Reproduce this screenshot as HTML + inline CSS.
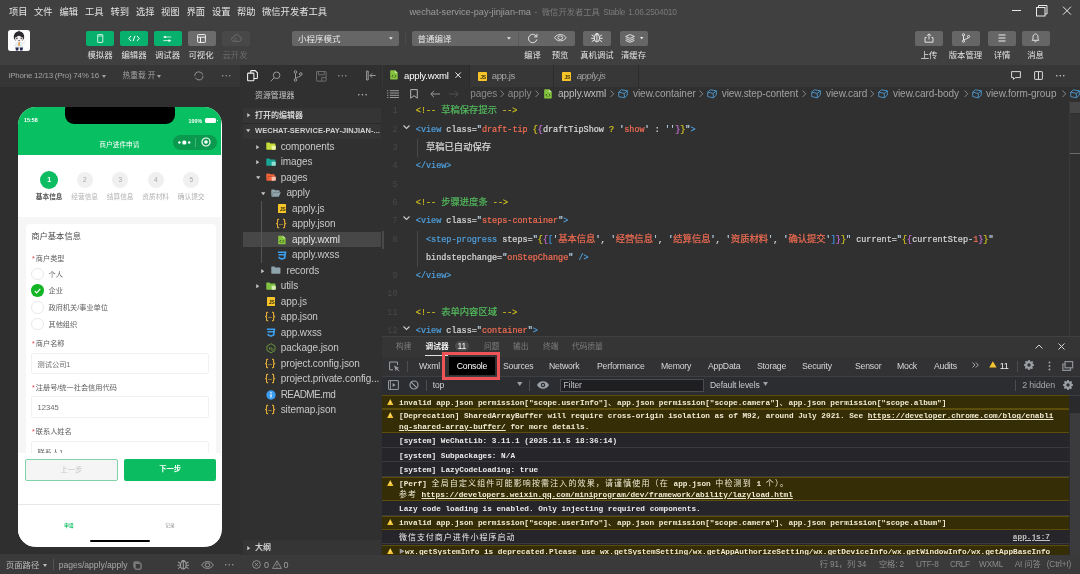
<!DOCTYPE html>
<html lang="zh-CN">
<head>
<meta charset="utf-8">
<title>wechat-service-pay-jinjian-ma - 微信开发者工具 Stable 1.06.2504010</title>
<style>
*{box-sizing:border-box;margin:0;padding:0}
html,body{width:1080px;height:574px;overflow:hidden;background:#2e2e2e}
body{font-family:"Liberation Sans","Noto Sans CJK SC",sans-serif;color:#ccc;font-size:10px;-webkit-font-smoothing:antialiased}
#app{position:relative;width:1080px;height:574px;overflow:hidden;will-change:transform}
.a{position:absolute}
.t{position:absolute;white-space:nowrap}
svg{position:absolute;overflow:visible}
.mono{font-family:"Liberation Mono","Noto Sans CJK SC",monospace}

/* ---------- top bars ---------- */
#top{left:0;top:0;width:1080px;height:65px;background:#404040}
.menu{top:4.700px;height:15px;line-height:15px;font-size:9.3px;color:#e4e4e4}
.tb{top:30.500px;height:15.300px;width:28px;border-radius:2px;background:#666}
.tb.g{background:#07b06d}
.tb.d{background:#484848}
.tl{top:49px;height:12px;line-height:12px;font-size:8.4px;color:#e2e2e2;text-align:center;width:40px}
.dd{top:30.500px;height:15.300px;border-radius:2px;background:#666;color:#e6e6e6;font-size:8.500px;line-height:17.500px;padding-left:6px}

/* ---------- simulator ---------- */
#sim{left:0;top:65px;width:240px;height:509px;background:#2f2f2f}
#simbar{left:0;top:0;width:240px;height:21.600px;background:#363636}
#simfoot{left:0;top:488.500px;width:240px;height:21px;background:#3a3a3a}
#phone{left:18.400px;top:42px;width:203.500px;height:440px;border-radius:18px;background:#fff;overflow:hidden}


/* phone */
.stp{top:64.500px;width:16px;height:16px;border-radius:8px;background:#f0f0f0;color:#a8a8a8;font-size:6.500px;line-height:16px;text-align:center}
.stl{top:85.200px;height:10px;line-height:10px;font-size:6.700px;color:#b2b2b2;width:40px;text-align:center}
.fl{left:13.700px;height:10px;line-height:10px;font-size:7.200px;color:#5c5c5c}
.fl i{font-style:normal;color:#e64340;margin-right:-1.100px}
.rd{left:13.100px;width:12.500px;height:12.500px;border-radius:50%;border:.7px solid #e9e9e9;background:#fff}
.rd.on{background:#14b524;border:none}
.rl{left:30.100px;height:12.500px;line-height:12.500px;font-size:7.200px;color:#606060}
.inp{left:12.700px;width:177.500px;height:21.500px;border:.7px solid #f1f1f1;border-radius:2px;background:#fff;font-size:7.200px;color:#6a6a6a;line-height:22px;padding-left:5.500px}

/* ---------- explorer ---------- */
#exp{left:240px;top:65px;width:142px;height:490px;background:#303030}
.row{position:absolute;left:2px;width:139px;height:15.5px;line-height:15.5px;font-size:10.2px;color:#ccc;white-space:nowrap;overflow:hidden}
.row span{position:absolute;top:0}

.ft{height:15.500px;line-height:15px;font-size:10px;letter-spacing:-.08px}
/* ---------- editor ---------- */
#ed{left:382px;top:65px;width:698px;height:271px;background:#303030}
.cl{position:absolute;left:0;height:18.3px;line-height:18.3px;font-size:8.48px;white-space:pre;color:#d4d4d4;-webkit-text-stroke:.22px}
.ln{position:absolute;width:14px;text-align:right;color:#484848;font-size:8.48px;height:18.3px;line-height:18.3px}

.bc{top:21px;height:15px;line-height:15px;font-size:10px;letter-spacing:-.05px}
.cj{font-size:9.300px;line-height:1px}
/* ---------- debugger ---------- */
#dbg{left:382px;top:336px;width:698px;height:219px;background:#2a2a2a}
.cr{position:absolute;left:0;width:687px;font-size:7.740px;color:#ececec;font-weight:bold;white-space:pre;border-bottom:.7px solid #3a3a3e;overflow:hidden}
.cr.w{background:#352d05;border-top:.7px solid #5c4e0a;border-bottom:.7px solid #5c4e0a;color:#f0ead4}
.cr u{text-decoration:underline}
.cc{font-family:"Noto Sans CJK SC",sans-serif;font-size:8px;letter-spacing:.95px;font-weight:normal;line-height:1px}

/* ---------- status ---------- */
#status{left:240px;top:555px;width:840px;height:19px;background:#3a3a3a;color:#8e8e8e;font-size:9px}
</style>
</head>
<body>
<div id="app">

<!-- TOP -->
<div id="top" class="a">
<span class="t menu" style="left:9px">项目</span>
<span class="t menu" style="left:34px">文件</span>
<span class="t menu" style="left:59.5px">编辑</span>
<span class="t menu" style="left:85px">工具</span>
<span class="t menu" style="left:110.5px">转到</span>
<span class="t menu" style="left:136px">选择</span>
<span class="t menu" style="left:161px">视图</span>
<span class="t menu" style="left:186.5px">界面</span>
<span class="t menu" style="left:212px">设置</span>
<span class="t menu" style="left:237px">帮助</span>
<span class="t menu" style="left:262px">微信开发者工具</span>
<span class="t" id="ttl" style="left:409.400px;top:4.900px;height:15px;line-height:15px;font-size:9.200px;color:#9c9c9c">wechat-service-pay-jinjian-ma</span>
<span class="t" style="left:534.500px;top:4.900px;height:15px;line-height:15px;font-size:8.300px;color:#7a7a7a">-</span>
<span class="t" style="left:541.800px;top:4.900px;height:15px;line-height:15px;font-size:8.300px;color:#7a7a7a">微信开发者工具</span>
<span class="t" style="left:603.300px;top:4.900px;height:15px;line-height:15px;font-size:8.300px;color:#7a7a7a;letter-spacing:-.3px">Stable</span>
<span class="t" style="left:628.300px;top:4.900px;height:15px;line-height:15px;font-size:8.300px;color:#7a7a7a;letter-spacing:-.2px">1.06.2504010</span>
<!-- window controls -->
<svg style="left:1010px;top:3px" width="66" height="16" viewBox="0 0 66 16" fill="none" stroke="#e8e8e8" stroke-width="1"><path d="M2 7.5h9"/><rect x="26.5" y="4.5" width="8.5" height="8.5"/><path d="M28.5 4.5v-2h8.5v8.5h-2"/><path d="M53 3.7l8 8M61 3.7l-8 8"/></svg>
<!-- avatar -->
<div class="a" style="left:8.200px;top:29.900px;width:22px;height:21.500px;border-radius:2.500px;background:#fcfcfc;overflow:hidden">
<svg style="left:0;top:0" width="22" height="21.500" viewBox="0 0 22 21.500"><path d="M5.900 8.300C5.300 4.300 7.600 1.600 10.200 1.500l.8-1.300.8 1.300c2.800.2 4.900 2.800 4.300 6.800l-1.300 2.300H7.200z" fill="#2c2c30"/><ellipse cx="11" cy="8.800" rx="3.900" ry="3.100" fill="#f6f1ee"/><path d="M7.300 7.300c1.500-.3 2.800-1.200 3.500-2.300.9 1.200 2.400 2 3.900 2.300l.3-1.800-3.900-2.300-3.900 2z" fill="#2c2c30"/><circle cx="8.900" cy="8.400" r=".8" fill="#4a4a4a"/><circle cx="13.300" cy="8.400" r=".8" fill="#4a4a4a"/><ellipse cx="11.100" cy="10.600" rx=".7" ry=".55" fill="#333"/><path d="M7.800 12.600c1.800-1.100 4.800-1.100 6.600 0l.9 5.200H6.600z" fill="#e6edf1"/><path d="M4.700 16.300l3-2.800.4 2z" fill="#e6edf1"/><path d="M14.400 13l2.600-3 .7.500-1.700 4z" fill="#e8eef2"/><path d="M10.400 12h1.400l.3 3.300-1 .9-1-.9z" fill="#dba552"/><path d="M7.400 17.400h3.300l-.4 3H7.900zM11.700 17.400H15l-.5 3h-2.400z" fill="#23264c"/></svg>
</div>
<!-- left buttons -->
<div class="a tb g" style="left:86px"><svg style="left:10.800px;top:3.200px" width="6.500" height="9" viewBox="0 0 6.500 9" fill="none" stroke="#eafff4" stroke-width=".85"><rect x=".7" y=".6" width="5.100" height="7.800" rx=".4"/><path d="M.8 2h4.900" stroke-width=".7"/></svg></div>
<div class="a tb g" style="left:120px"><svg style="left:8px;top:4px" width="12" height="7" viewBox="0 0 12 7" fill="none" stroke="#fff" stroke-width="1"><path d="M3 1L.8 3.5 3 6M9 1l2.2 2.5L9 6M7 .8L5 6.2"/></svg></div>
<div class="a tb g" style="left:153.5px"><svg style="left:9.800px;top:4px" width="8.500" height="7.500" viewBox="0 0 8.500 7.500" fill="none" stroke="#eafff4" stroke-width=".8"><path d="M.3 2h7.900M.3 5.600h7.900"/><rect x="1.300" y=".9" width="1.800" height="2.200" rx=".4" fill="#eafff4" stroke="none"/><rect x="5.300" y="4.500" width="1.800" height="2.200" rx=".4" fill="#eafff4" stroke="none"/></svg></div>
<div class="a tb" style="left:187.500px;background:#6c6c6c"><svg style="left:9.5px;top:3px" width="9" height="9" viewBox="0 0 9 9" fill="none" stroke="#f2f2f2" stroke-width="1"><rect x=".6" y=".6" width="7.8" height="7.8" rx=".6"/><path d="M.6 3.2h7.800M3.500 3.2v5.200"/></svg></div>
<div class="a tb d" style="left:222px"><svg style="left:8.500px;top:3.500px" width="11" height="8" viewBox="0 0 11 8" fill="none" stroke="#707070" stroke-width=".85"><path d="M2.800 7.300a2.100 2.100 0 0 1-.1-4.200 3.100 3.100 0 0 1 5.900-.5 2.400 2.400 0 0 1-.2 4.700z"/><path d="M4.300 7.200a2 2 0 0 1 1.500-3.300" stroke-width=".7"/></svg></div>
<span class="t tl" style="left:80px">模拟器</span>
<span class="t tl" style="left:114px">编辑器</span>
<span class="t tl" style="left:147.500px">调试器</span>
<span class="t tl" style="left:181px">可视化</span>
<span class="t tl" style="left:215px;color:#6a6a6a">云开发</span>
<!-- dropdowns -->
<div class="a dd" style="left:292px;width:107px">小程序模式<svg style="left:96.500px;top:6.800px" width="3.800" height="2.600" viewBox="0 0 5 3"><path d="M0 0h5L2.500 3z" fill="#eee"/></svg></div>
<div class="a" style="left:405px;top:31px;width:1px;height:13px;background:#4a4a4a"></div>
<div class="a dd" style="left:411.500px;width:106px;border-radius:2px 0 0 2px">普通编译<svg style="left:95.500px;top:6.800px" width="3.800" height="2.600" viewBox="0 0 5 3"><path d="M0 0h5L2.500 3z" fill="#eee"/></svg></div>
<!-- center buttons -->
<div class="a tb" style="left:517.500px;width:57px;border-radius:0 2px 2px 0;border-left:.8px solid #5a5a5a">
<svg style="left:8px;top:2.300px" width="11.500" height="10.300" viewBox="0 0 10 9" fill="none" stroke="#eee" stroke-width=".8"><path d="M8.300 3.200A3.700 3.700 0 1 0 8.600 5.600"/><path d="M8.700 .8v2.600H6.200" /></svg>
<svg style="left:35.700px;top:3.800px" width="12.600" height="7.400" viewBox="0 0 12 7" fill="none" stroke="#eee" stroke-width=".8"><path d="M.5 3.500C2 1.200 4 .5 6 .5s4 .7 5.500 3C10 5.800 8 6.500 6 6.500S2 5.800.5 3.500z"/><ellipse cx="6" cy="3.500" rx="2.300" ry="1.700"/></svg>
</div>
<div class="a tb" style="left:583px"><svg style="left:7.200px;top:1.700px" width="13.800" height="11.500" viewBox="0 0 12 10" fill="none" stroke="#f0f0f0" stroke-width=".8"><ellipse cx="6" cy="5.300" rx="2.300" ry="3.300"/><path d="M6 2v6.600M4.300 2.300C4.500 .9 7.500 .9 7.700 2.300M3.700 4L1.500 2.500M3.700 5.500H1M3.700 7l-2.200 1.500M8.300 4l2.200-1.500M8.300 5.500H11M8.300 7l2.200 1.500"/></svg></div>
<div class="a tb" style="left:619.500px"><svg style="left:5.500px;top:3px" width="10" height="9" viewBox="0 0 10 9" fill="none" stroke="#f0f0f0" stroke-width=".9"><path d="M5 .6L9.300 2.500 5 4.400 .7 2.500zM.7 4.500L5 6.400l4.300-1.900M.7 6.400L5 8.300l4.300-1.900"/></svg><svg style="left:20px;top:6.500px" width="3.400" height="2.200" viewBox="0 0 4 2.500"><path d="M0 0h4L2 2.500z" fill="#f0f0f0"/></svg></div>
<span class="t tl" style="left:512.500px">编译</span>
<span class="t tl" style="left:540px">预览</span>
<span class="t tl" style="left:577px">真机调试</span>
<span class="t tl" style="left:613.500px">清缓存</span>
<!-- right buttons -->
<div class="a tb" style="left:915px"><svg style="left:9px;top:2.500px" width="10" height="10" viewBox="0 0 10 10" fill="none" stroke="#eee" stroke-width=".9"><path d="M5 6.500V1M3 2.800L5 .8l2 2M2.500 4.500H1v4.700h8V4.500H7.500"/></svg></div>
<div class="a tb" style="left:951.500px"><svg style="left:9px;top:2.500px" width="10" height="10" viewBox="0 0 10 10" fill="none" stroke="#eee" stroke-width=".9"><circle cx="2.500" cy="1.800" r="1.100"/><circle cx="2.500" cy="8.200" r="1.100"/><circle cx="7.500" cy="3.500" r="1.100"/><path d="M2.500 3v4M7.500 4.600C7.500 6 3.500 5.800 2.700 7"/></svg></div>
<div class="a tb" style="left:988px"><svg style="left:10px;top:3.500px" width="8" height="8" viewBox="0 0 8 8" fill="none" stroke="#eee" stroke-width="1"><path d="M.5 1h7M.5 4h7M.5 7h7"/></svg></div>
<div class="a tb" style="left:1021.500px"><svg style="left:9.500px;top:2.500px" width="9" height="10" viewBox="0 0 9 10" fill="none" stroke="#eee" stroke-width=".9"><path d="M1.200 7.300c.8-.8.800-1.600.8-3.200C2 2.300 3 1 4.500 1S7 2.300 7 4.100c0 1.600 0 2.400.8 3.200zM3.700 8.700h1.600"/></svg></div>
<span class="t tl" style="left:909px">上传</span>
<span class="t tl" style="left:945.500px">版本管理</span>
<span class="t tl" style="left:982px">详情</span>
<span class="t tl" style="left:1015.500px">消息</span>

</div>

<!-- SIM -->
<div id="sim" class="a">
<div id="simbar" class="a"><span class="t" style="left:8.700px;top:4px;height:14px;line-height:14px;font-size:8px;letter-spacing:-.25px;color:#a2a2a2">iPhone 12/13 (Pro) 74% 16</span>
<svg style="left:101.500px;top:10px" width="4" height="3" viewBox="0 0 4 3"><path d="M0 0h4L2 3z" fill="#a2a2a2"/></svg>
<span class="t" style="left:122.500px;top:4px;height:14px;line-height:14px;font-size:7.700px;color:#a2a2a2">热重载 开</span>
<svg style="left:157px;top:10px" width="4" height="3" viewBox="0 0 4 3"><path d="M0 0h4L2 3z" fill="#a2a2a2"/></svg>
<svg style="left:193.700px;top:6.200px" width="9.800" height="9.800" viewBox="0 0 9 9" fill="none" stroke="#9a9a9a" stroke-width=".85"><circle cx="4.500" cy="4.500" r="3.700" stroke-dasharray="9.500 1.600 10.500 1.600"/></svg>
<svg style="left:221.7px;top:10.450000000000003px" width="8.5" height="1.5" viewBox="0 0 8.5 1.5"><circle cx="0.75" cy="0.75" r="0.75" fill="#a0a0a0"/><circle cx="4.25" cy="0.75" r="0.75" fill="#a0a0a0"/><circle cx="7.75" cy="0.75" r="0.75" fill="#a0a0a0"/></svg>
</div>
<div id="phone" class="a"><!-- header -->
<div class="a" style="left:0;top:0;width:203px;height:47.500px;background:#08bf61"></div>
<div class="a" style="left:46.800px;top:-6px;width:110px;height:23px;border-radius:9px;background:#000"></div>
<span class="t" style="left:5.500px;top:9px;height:8px;line-height:8px;font-size:5.400px;color:#fff;font-weight:bold">15:58</span>
<span class="t" style="left:170.200px;top:9.600px;height:8px;line-height:8px;font-size:5.300px;color:#fff;font-weight:bold">100%</span>
<div class="a" style="left:186.200px;top:11.400px;width:11.800px;height:4.500px;border-radius:1.500px;background:#fff"></div>
<div class="a" style="left:198.300px;top:12.700px;width:.8px;height:1.800px;background:#fff"></div>
<span class="t" style="left:61px;width:80px;text-align:center;top:33.200px;height:10px;line-height:10px;font-size:6.700px;color:#fff">商户进件申请</span>
<div class="a" style="left:155.100px;top:27.800px;width:43.600px;height:15px;border-radius:8px;background:#0a994e"></div>
<div class="a" style="left:176.800px;top:31px;width:.6px;height:8.500px;background:#3fb57a"></div>
<svg style="left:160px;top:32.800px" width="13" height="5" viewBox="0 0 13 5"><circle cx="1.400" cy="2.500" r="1.200" fill="#fff"/><rect x="4.300" y=".5" width="4" height="4" rx="1.500" fill="#fff"/><circle cx="11.200" cy="2.500" r="1.200" fill="#fff"/></svg>
<svg style="left:182.500px;top:30.300px" width="10" height="10" viewBox="0 0 10 10"><circle cx="5" cy="5" r="4" fill="none" stroke="#fff" stroke-width="1.200"/><circle cx="5" cy="5" r="1.800" fill="#fff"/></svg>
<!-- steps -->
<div class="a" style="left:0;top:47.500px;width:203px;height:62.800px;background:#fff"></div>
<div class="a" style="left:21.700px;top:63.500px;width:18px;height:18px;border-radius:9px;background:#0bbd60;color:#fff;font-size:7px;line-height:18px;text-align:center;font-weight:bold">1</div>
<div class="a stp" style="left:58.4px">2</div>
<div class="a stp" style="left:93.9px">3</div>
<div class="a stp" style="left:129.4px">4</div>
<div class="a stp" style="left:164.9px">5</div>
<span class="t stl" style="left:10.8px;color:#555;font-weight:bold">基本信息</span>
<span class="t stl" style="left:46.3px">经营信息</span>
<span class="t stl" style="left:81.8px">结算信息</span>
<span class="t stl" style="left:117.3px">资质材料</span>
<span class="t stl" style="left:152.8px">确认提交</span>
<!-- body -->
<div class="a" style="left:0;top:110px;width:203px;height:240px;background:#f6f6f6"></div>
<div class="a" style="left:7.800px;top:116.800px;width:189.700px;height:240px;border-radius:4px;background:#fff"></div>
<span class="t" style="left:12.800px;top:123px;height:12px;line-height:12px;font-size:8.300px;color:#4c4c4c">商户基本信息</span>
<span class="t fl" style="top:146.800px"><i>*</i> 商户类型</span>
<div class="a rd" style="top:160.750px"></div><span class="t rl" style="top:162px">个人</span>
<div class="a rd on" style="top:177.250px"><svg style="left:2.500px;top:3.300px" width="7" height="6" viewBox="0 0 7 6" fill="none" stroke="#fff" stroke-width="1.100"><path d="M.8 3l1.900 1.900L6.300.9"/></svg></div><span class="t rl" style="top:178px">企业</span>
<div class="a rd" style="top:194.250px"></div><span class="t rl" style="top:194.700px">政府机关/事业单位</span>
<div class="a rd" style="top:210.750px"></div><span class="t rl" style="top:212.400px">其他组织</span>
<span class="t fl" style="top:232px"><i>*</i> 商户名称</span>
<div class="a inp" style="top:245.800px;height:21px">测试公司1</div>
<span class="t fl" style="top:275.500px"><i>*</i> 注册号/统一社会信用代码</span>
<div class="a inp" style="top:289px;font-size:7.600px">12345</div>
<span class="t fl" style="top:320px"><i>*</i> 联系人姓名</span>
<div class="a inp" style="top:333.500px">联系人1</div>
<!-- action bar -->
<div class="a" style="left:0;top:345.500px;width:202px;height:52px;background:#fff"></div>
<div class="a" style="left:6.500px;top:352px;width:93.300px;height:21.500px;border-radius:2px;background:#f5f5f5;border:.8px solid #7fd3a6;color:#c4c4c4;font-size:7.300px;line-height:20px;text-align:center">上一步</div>
<div class="a" style="left:106px;top:352px;width:91.700px;height:21.500px;border-radius:2px;background:#0bbd60;color:#fff;font-size:7.300px;line-height:20px;text-align:center;font-weight:bold">下一步</div>
<!-- tabbar -->
<div class="a" style="left:0;top:397px;width:202px;height:42px;background:#fff;border-top:.6px solid #e6e6e6"></div>
<span class="t" style="left:40.500px;width:20px;text-align:center;top:416px;height:6px;line-height:6px;font-size:4.600px;color:#0bbd60;font-weight:bold">申请</span>
<span class="t" style="left:141.500px;width:20px;text-align:center;top:416px;height:6px;line-height:6px;font-size:4.600px;color:#8a8a8a">记录</span>
<div class="a" style="left:71.700px;top:432.800px;width:60px;height:2.400px;border-radius:1.200px;background:#000"></div>
</div>
<div id="simfoot" class="a"><span class="t" style="left:5.900px;top:4.300px;height:14px;line-height:14px;font-size:8.350px;color:#bdbdbd">页面路径</span>
<svg style="left:43px;top:10.500px" width="4" height="3" viewBox="0 0 4 3"><path d="M0 0h4L2 3z" fill="#bdbdbd"/></svg>
<div class="a" style="left:52.500px;top:5.500px;width:.8px;height:11px;background:#555"></div>
<span class="t" style="left:58.800px;top:4px;height:14px;line-height:14px;font-size:8.600px;letter-spacing:-.04px;color:#a8a8a8">pages/apply/apply</span>
<svg style="left:132.600px;top:7px" width="9" height="9" viewBox="0 0 9 9" fill="none" stroke="#a0a0a0" stroke-width=".9"><rect x="2" y="2.200" width="6" height="6" rx=".6"/><path d="M1 6.500V1h5.500"/></svg>
<svg style="left:176.300px;top:5.800px" width="14.600" height="11.300" viewBox="0 0 13 10" fill="none" stroke="#a0a0a0" stroke-width=".9"><ellipse cx="6.500" cy="5.300" rx="2.500" ry="3.500"/><path d="M6.500 2v6.800M4.800 2.300C5 .9 8 .9 8.200 2.300M4 4L1.800 2.500M4 5.500H1.300M4 7l-2.200 1.500M9 4l2.200-1.500M9 5.500h2.700M9 7l2.200 1.500"/></svg>
<svg style="left:200.500px;top:7.500px" width="13" height="8" viewBox="0 0 13 8" fill="none" stroke="#a0a0a0" stroke-width=".9"><path d="M.6 4C2.200 1.500 4.300.6 6.500.6s4.300.9 5.900 3.400C10.800 6.500 8.700 7.400 6.500 7.400S2.200 6.500.6 4z"/><ellipse cx="6.500" cy="4" rx="2.400" ry="1.900"/></svg>
<svg style="left:225px;top:10.600px" width="8.5" height="1.5" viewBox="0 0 8.5 1.5"><circle cx="0.75" cy="0.75" r="0.75" fill="#a0a0a0"/><circle cx="4.25" cy="0.75" r="0.75" fill="#a0a0a0"/><circle cx="7.75" cy="0.75" r="0.75" fill="#a0a0a0"/></svg>
</div>
</div>

<!-- EXPLORER -->
<div id="exp" class="a">
<div class="a" style="left:0;top:0;width:142px;height:22px;background:#303030"></div>
<svg style="left:7.300px;top:5.200px" width="11" height="11.500" viewBox="0 0 11 11.500" fill="none" stroke="#f2f2f2" stroke-width="1.050"><path d="M3.700 3V1.300c0-.4.300-.7.700-.7h3.800l2.200 2.200v5c0 .4-.3.700-.7.700H7"/><rect x=".6" y="3.100" width="6.300" height="7.700" rx=".8"/></svg>
<svg style="left:30px;top:5.500px" width="11" height="11" viewBox="0 0 11 11" fill="none" stroke="#9a9a9a" stroke-width="1"><circle cx="6.600" cy="4.300" r="3.300"/><path d="M4.300 6.700L.8 10.300"/></svg>
<svg style="left:53px;top:5px" width="10" height="12" viewBox="0 0 10 12" fill="none" stroke="#9a9a9a" stroke-width="1"><circle cx="2.500" cy="2" r="1.300"/><circle cx="2.500" cy="10" r="1.300"/><circle cx="7.800" cy="4" r="1.300"/><path d="M2.500 3.300v5.400M7.800 5.300c0 2-4.500 1.600-5.300 3.400"/></svg>
<svg style="left:76px;top:5.700px" width="10.600" height="10.600" viewBox="0 0 10.600 10.600" fill="none" stroke="#707070" stroke-width=".95"><rect x=".5" y=".5" width="9.600" height="9.600" rx=".5"/><path d="M2.400.5v3.300h5.800V.5M5.800 10.100V6.600h4.300"/></svg>
<svg style="left:97.5px;top:10.049999999999997px" width="8.5" height="1.5" viewBox="0 0 8.5 1.5"><circle cx="0.75" cy="0.75" r="0.75" fill="#9a9a9a"/><circle cx="4.25" cy="0.75" r="0.75" fill="#9a9a9a"/><circle cx="7.75" cy="0.75" r="0.75" fill="#9a9a9a"/></svg>
<svg style="left:126px;top:6px" width="10" height="9" viewBox="0 0 10 9" fill="none" stroke="#9a9a9a" stroke-width="1"><path d="M.6 0h1.600v9H.6zM9.700 4.500H4.200M6.200 2.300L4 4.500l2.200 2.200"/></svg>
<span class="t" style="left:15px;top:23.500px;height:13px;line-height:13px;font-size:7.900px;color:#c4c4c4">资源管理器</span>
<svg style="left:118px;top:28.950000000000003px" width="8.9" height="1.5" viewBox="0 0 8.9 1.5"><circle cx="0.75" cy="0.75" r="0.75" fill="#c4c4c4"/><circle cx="4.45" cy="0.75" r="0.75" fill="#c4c4c4"/><circle cx="8.15" cy="0.75" r="0.75" fill="#c4c4c4"/></svg>
<div class="a" style="left:2.500px;top:42.700px;width:138.500px;height:31px;background:#353535"></div>
<div class="a" style="left:2.500px;top:58px;width:138.500px;height:.6px;background:#2a2a2a"></div>
<svg style="left:6.8px;top:48.300000000000004px" width="3.400" height="4.400" viewBox="0 0 4 5"><path d="M.3 0v5L3.800 2.500z" fill="#c8c8c8"/></svg>
<span class="t" style="left:15px;top:42.700px;height:15.500px;line-height:15.500px;font-size:8px;font-weight:bold;color:#d0d0d0">打开的编辑器</span>
<svg style="left:5.8999999999999995px;top:64.4px" width="4.400" height="3.400" viewBox="0 0 5 4"><path d="M0 .3h5L2.500 3.800z" fill="#c8c8c8"/></svg>
<span class="t" style="left:15px;top:58.200px;height:15.500px;line-height:15.500px;font-size:7.500px;font-weight:bold;color:#d0d0d0;letter-spacing:.05px">WECHAT-SERVICE-PAY-JINJIAN-...</span>
<div class="a" style="left:2.500px;top:166.9px;width:138.500px;height:15.500px;background:#474747"></div>
<div class="a" style="left:21.300px;top:135.9px;width:.6px;height:62.0px;background:#555"></div>
<svg style="left:16.4px;top:79.5px" width="3.400" height="4.400" viewBox="0 0 4 5"><path d="M.3 0v5L3.800 2.500z" fill="#c8c8c8"/></svg>
<svg style="left:26.2px;top:77.4px" width="10" height="8.200" viewBox="0 0 11 9"><path d="M.3 1.200c0-.4.3-.7.700-.7h2.800l1 1.100h4.900c.4 0 .7.300.7.700v5.500c0 .4-.3.700-.7.700H1c-.4 0-.7-.3-.7-.7z" fill="#c5dc3a"/><rect x="6.200" y="4.200" width="4.600" height="4.400" rx=".8" fill="#eef5a8"/></svg>
<span class="t ft" style="left:40.7px;top:73.9px;color:#c8c8c8">components</span>
<svg style="left:16.4px;top:95.0px" width="3.400" height="4.400" viewBox="0 0 4 5"><path d="M.3 0v5L3.800 2.500z" fill="#c8c8c8"/></svg>
<svg style="left:26.2px;top:92.9px" width="10" height="8.200" viewBox="0 0 11 9"><path d="M.3 1.200c0-.4.3-.7.700-.7h2.800l1 1.100h4.900c.4 0 .7.300.7.700v5.500c0 .4-.3.700-.7.700H1c-.4 0-.7-.3-.7-.7z" fill="#17a596"/><rect x="6.200" y="4.200" width="4.600" height="4.400" rx=".8" fill="#8fe0d2"/></svg>
<span class="t ft" style="left:40.7px;top:89.4px;color:#c8c8c8">images</span>
<svg style="left:15.700000000000001px;top:111.10000000000001px" width="4.400" height="3.400" viewBox="0 0 5 4"><path d="M0 .3h5L2.500 3.800z" fill="#c8c8c8"/></svg>
<svg style="left:26.2px;top:108.4px" width="10" height="8.200" viewBox="0 0 11 9"><path d="M.3 8.300V1.200c0-.4.3-.7.700-.7h2.600l1 1h4.200c.4 0 .7.300.7.700v1H2.800L.3 8.300z" fill="#f4623a"/><path d="M2.600 3.600h8.200L8.600 8.500H.5z" fill="#f4623a"/><rect x="6.200" y="4.200" width="4.600" height="4.400" rx=".8" fill="#ffc1ad"/></svg>
<span class="t ft" style="left:40.7px;top:104.9px;color:#c8c8c8">pages</span>
<svg style="left:20.7px;top:126.60000000000001px" width="4.400" height="3.400" viewBox="0 0 5 4"><path d="M0 .3h5L2.500 3.800z" fill="#c8c8c8"/></svg>
<svg style="left:31.4px;top:123.9px" width="10" height="8.200" viewBox="0 0 11 9"><path d="M.3 8.300V1.200c0-.4.3-.7.700-.7h2.600l1 1h4.200c.4 0 .7.300.7.700v1H2.800L.3 8.300z" fill="#8fa3ad"/><path d="M2.600 3.600h8.200L8.600 8.500H.5z" fill="#8fa3ad"/></svg>
<span class="t ft" style="left:46.4px;top:120.4px;color:#c8c8c8">apply</span>
<div class="a" style="left:37.5px;top:139.20000000000002px;width:8.600px;height:8.800px;background:#f7c52a;border-radius:.6px"><span class="t" style="right:.5px;bottom:.3px;font-size:5.200px;line-height:5.500px;font-weight:bold;letter-spacing:-.2px;color:#3a3208;font-family:'Liberation Sans',sans-serif">JS</span></div>
<span class="t ft" style="left:52px;top:135.9px;color:#c8c8c8">apply.js</span>
<span class="t" style="left:36.1px;top:151.4px;height:15.500px;line-height:14.500px;font-size:9.500px;font-weight:normal;color:#f3b93a;letter-spacing:-.3px;-webkit-text-stroke:.3px;font-family:'Liberation Sans',sans-serif">{<span style="font-size:6px;letter-spacing:0;position:relative;top:-.3px">··</span>}</span>
<span class="t ft" style="left:52px;top:151.4px;color:#c8c8c8">apply.json</span>
<svg style="left:38.1px;top:169.6px" width="7.800" height="10" viewBox="0 0 9 10.500"><path d="M1 .2h4.800L8.800 3.200v6.300c0 .5-.4.800-.8.800H1c-.5 0-.8-.4-.8-.8V1C.2.600.6.200 1 .2z" fill="#86c43f"/><path d="M5.600.2v3h3.200z" fill="#c9e6a0"/><path d="M3.600 5.300L2.200 6.800l1.400 1.500M5.400 5.300l1.400 1.500-1.400 1.500" fill="none" stroke="#2e4a12" stroke-width="1"/></svg>
<span class="t ft" style="left:52px;top:166.9px;color:#e0e0e0">apply.wxml</span>
<svg style="left:37px;top:185.6px" width="9.800" height="9.300" viewBox="0 0 10 9.500"><path d="M.8.400h8.800L8.600 7.600 5 9.200 1.600 7.600 1.400 6H3l.1.600L5 7.400l2-.8.300-2H1.600L1.400 3h6.100l.2-1H1z" fill="#3b9ff0"/></svg>
<span class="t ft" style="left:52px;top:182.4px;color:#c8c8c8">apply.wxss</span>
<svg style="left:21.4px;top:203.5px" width="3.400" height="4.400" viewBox="0 0 4 5"><path d="M.3 0v5L3.800 2.500z" fill="#c8c8c8"/></svg>
<svg style="left:31.4px;top:201.4px" width="10" height="8.200" viewBox="0 0 11 9"><path d="M.3 1.200c0-.4.3-.7.700-.7h2.800l1 1.100h4.900c.4 0 .7.300.7.700v5.500c0 .4-.3.700-.7.700H1c-.4 0-.7-.3-.7-.7z" fill="#8fa3ad"/></svg>
<span class="t ft" style="left:46.4px;top:197.9px;color:#c8c8c8">records</span>
<svg style="left:16.4px;top:219.0px" width="3.400" height="4.400" viewBox="0 0 4 5"><path d="M.3 0v5L3.800 2.500z" fill="#c8c8c8"/></svg>
<svg style="left:26.2px;top:216.9px" width="10" height="8.200" viewBox="0 0 11 9"><path d="M.3 1.200c0-.4.3-.7.700-.7h2.800l1 1.100h4.900c.4 0 .7.300.7.700v5.500c0 .4-.3.700-.7.700H1c-.4 0-.7-.3-.7-.7z" fill="#80c241"/><rect x="6.200" y="4.200" width="4.600" height="4.400" rx=".8" fill="#d6efb4"/></svg>
<span class="t ft" style="left:40.7px;top:213.4px;color:#c8c8c8">utils</span>
<div class="a" style="left:26.5px;top:232.20000000000002px;width:8.600px;height:8.800px;background:#f7c52a;border-radius:.6px"><span class="t" style="right:.5px;bottom:.3px;font-size:5.200px;line-height:5.500px;font-weight:bold;letter-spacing:-.2px;color:#3a3208;font-family:'Liberation Sans',sans-serif">JS</span></div>
<span class="t ft" style="left:40.7px;top:228.9px;color:#c8c8c8">app.js</span>
<span class="t" style="left:25.1px;top:244.4px;height:15.500px;line-height:14.500px;font-size:9.500px;font-weight:normal;color:#f3b93a;letter-spacing:-.3px;-webkit-text-stroke:.3px;font-family:'Liberation Sans',sans-serif">{<span style="font-size:6px;letter-spacing:0;position:relative;top:-.3px">··</span>}</span>
<span class="t ft" style="left:40.7px;top:244.4px;color:#c8c8c8">app.json</span>
<svg style="left:26px;top:263.09999999999997px" width="9.800" height="9.300" viewBox="0 0 10 9.500"><path d="M.8.400h8.800L8.600 7.600 5 9.200 1.600 7.600 1.400 6H3l.1.600L5 7.400l2-.8.300-2H1.600L1.400 3h6.100l.2-1H1z" fill="#3b9ff0"/></svg>
<span class="t ft" style="left:40.7px;top:259.9px;color:#c8c8c8">app.wxss</span>
<svg style="left:26px;top:277.9px" width="10" height="10.500" viewBox="0 0 10 10.500" fill="none" stroke="#6c9c40" stroke-width=".9"><path d="M5 .7l4 2.300v4.500L5 9.800 1 7.500V3z"/><path d="M3.500 4.200v2.600M5 4v2.500c0 .6.500.9 1.300.9.900 0 1.200-.4 1.200-.9 0-1-2.300-.5-2.300-1.500" stroke-width=".7"/></svg>
<span class="t ft" style="left:40.7px;top:275.4px;color:#c8c8c8">package.json</span>
<span class="t" style="left:25.1px;top:290.9px;height:15.500px;line-height:14.500px;font-size:9.500px;font-weight:normal;color:#f3b93a;letter-spacing:-.3px;-webkit-text-stroke:.3px;font-family:'Liberation Sans',sans-serif">{<span style="font-size:6px;letter-spacing:0;position:relative;top:-.3px">··</span>}</span>
<span class="t ft" style="left:40.7px;top:290.9px;color:#c8c8c8">project.config.json</span>
<span class="t" style="left:25.1px;top:306.4px;height:15.500px;line-height:14.500px;font-size:9.500px;font-weight:normal;color:#f3b93a;letter-spacing:-.3px;-webkit-text-stroke:.3px;font-family:'Liberation Sans',sans-serif">{<span style="font-size:6px;letter-spacing:0;position:relative;top:-.3px">··</span>}</span>
<span class="t ft" style="left:40.7px;top:306.4px;color:#c8c8c8">project.private.config...</span>
<svg style="left:26px;top:324.9px" width="10" height="10" viewBox="0 0 10 10"><circle cx="5" cy="5" r="4.700" fill="#3b9cf0"/><rect x="4.400" y="4.200" width="1.200" height="3.300" fill="#fff"/><circle cx="5" cy="2.800" r=".75" fill="#fff"/></svg>
<span class="t ft" style="left:40.7px;top:321.9px;color:#c8c8c8;letter-spacing:-.54px">README.md</span>
<span class="t" style="left:25.1px;top:337.4px;height:15.500px;line-height:14.500px;font-size:9.500px;font-weight:normal;color:#f3b93a;letter-spacing:-.3px;-webkit-text-stroke:.3px;font-family:'Liberation Sans',sans-serif">{<span style="font-size:6px;letter-spacing:0;position:relative;top:-.3px">··</span>}</span>
<span class="t ft" style="left:40.7px;top:337.4px;color:#c8c8c8">sitemap.json</span>
<div class="a" style="left:2.500px;top:474.500px;width:138.500px;height:15.500px;background:#353535"></div>
<svg style="left:6.8px;top:480.6px" width="3.400" height="4.400" viewBox="0 0 4 5"><path d="M.3 0v5L3.800 2.500z" fill="#c8c8c8"/></svg>
<span class="t" style="left:15px;top:475px;height:15.500px;line-height:15.500px;font-size:8px;font-weight:bold;color:#d0d0d0">大纲</span>
</div>

<!-- EDITOR -->
<div id="ed" class="a">
<div class="a" style="left:0;top:0;width:698px;height:22px;background:#373737"></div>
<div class="a" style="left:1px;top:0;width:86px;height:22px;background:#303030"></div>
<div class="a" style="left:87px;top:0;width:.8px;height:22px;background:#2b2b2b"></div>
<div class="a" style="left:171px;top:0;width:.8px;height:22px;background:#2b2b2b"></div>
<div class="a" style="left:255.500px;top:0;width:.8px;height:22px;background:#2b2b2b"></div>
<svg style="left:8px;top:5.2px" width="7.92" height="9.63" preserveAspectRatio="none" viewBox="0 0 9 10.500"><path d="M1 .2h4.800L8.800 3.200v6.300c0 .5-.4.800-.8.800H1c-.5 0-.8-.4-.8-.8V1C.2.600.6.200 1 .2z" fill="#86c43f"/><path d="M5.600.2v3h3.200z" fill="#c9e6a0"/><path d="M3.600 5.300L2.200 6.800l1.400 1.500M5.400 5.300l1.400 1.500-1.400 1.500" fill="none" stroke="#2e4a12" stroke-width=".9"/></svg>
<span class="t" style="left:22px;top:2.800px;height:15px;line-height:15px;font-size:9.600px;letter-spacing:-.2px;color:#fff">apply.wxml</span>
<svg style="left:72.700px;top:7px" width="6.300" height="6.300" viewBox="0 0 7 7" stroke="#f0f0f0" stroke-width="1.100" fill="none"><path d="M.5.5l6 6M6.500.5l-6 6"/></svg>
<div class="a" style="left:95.5px;top:6.5px;width:9px;height:9px;background:#f7c52a;border-radius:.8px"><span class="t" style="right:.6px;bottom:.4px;font-size:5px;line-height:5.300px;font-weight:bold;letter-spacing:-.2px;color:#3a3208;font-family:'Liberation Sans',sans-serif">JS</span></div>
<span class="t" style="left:109.700px;top:2.800px;height:15px;line-height:15px;font-size:9.600px;letter-spacing:-.38px;color:#a6a6a6">app.js</span>
<div class="a" style="left:179.7px;top:6.5px;width:9px;height:9px;background:#f7c52a;border-radius:.8px"><span class="t" style="right:.6px;bottom:.4px;font-size:5px;line-height:5.300px;font-weight:bold;letter-spacing:-.2px;color:#3a3208;font-family:'Liberation Sans',sans-serif">JS</span></div>
<span class="t" style="left:194.700px;top:2.800px;height:15px;line-height:15px;font-size:9.600px;letter-spacing:-.4px;color:#a6a6a6;font-style:italic">apply.js</span>
<svg style="left:629px;top:6px" width="10" height="9" viewBox="0 0 10 9" fill="none" stroke="#d8d8d8" stroke-width="1"><path d="M.6.600h8.800v6H4.300L2.500 8.300V6.600H.6z"/></svg>
<svg style="left:652px;top:6px" width="9" height="9" viewBox="0 0 9 9" fill="none" stroke="#d8d8d8" stroke-width="1"><rect x=".6" y=".6" width="7.800" height="7.800" rx=".5"/><path d="M4.500.6v7.800"/></svg>
<svg style="left:674px;top:9.950000000000003px" width="8.5" height="1.5" viewBox="0 0 8.5 1.5"><circle cx="0.75" cy="0.75" r="0.75" fill="#d8d8d8"/><circle cx="4.25" cy="0.75" r="0.75" fill="#d8d8d8"/><circle cx="7.75" cy="0.75" r="0.75" fill="#d8d8d8"/></svg>
<svg style="left:4.700px;top:24.500px" width="12" height="8" viewBox="0 0 12 8" fill="none" stroke="#b4b4b4" stroke-width="1"><path d="M0 .7h1.300M2.800.7H12M0 3h1.300M2.800 3H12M0 5.300h1.300M2.800 5.300H12M0 7.500h1.300M2.800 7.500H12" stroke-width=".8"/></svg>
<svg style="left:27.500px;top:23.500px" width="8" height="10" viewBox="0 0 8 10" fill="none" stroke="#b4b4b4" stroke-width="1"><path d="M.7.600h6.600v8.600L4 6.700.7 9.200z"/></svg>
<svg style="left:47.500px;top:24.500px" width="10" height="8" viewBox="0 0 10 8" fill="none" stroke="#9a9a9a" stroke-width="1"><path d="M10 4H1M4 .8L.8 4 4 7.200"/></svg>
<svg style="left:66.600px;top:24.500px" width="10" height="8" viewBox="0 0 10 8" fill="none" stroke="#505050" stroke-width="1"><path d="M0 4h9M6 .8L9.200 4 6 7.200"/></svg>
<span class="t bc" style="left:88.3px;color:#8c8c8c">pages</span>
<svg style="left:117.5px;top:25.300px" width="4.300" height="7.600" viewBox="0 0 4 7" fill="none" stroke="#8a8a8a" stroke-width=".9"><path d="M.5.500l3 3-3 3"/></svg>
<span class="t bc" style="left:125.8px;color:#8c8c8c">apply</span>
<svg style="left:153px;top:25.300px" width="4.300" height="7.600" viewBox="0 0 4 7" fill="none" stroke="#8a8a8a" stroke-width=".9"><path d="M.5.500l3 3-3 3"/></svg>
<svg style="left:162.3px;top:23.7px" width="7.92" height="9.63" preserveAspectRatio="none" viewBox="0 0 9 10.500"><path d="M1 .2h4.800L8.800 3.200v6.300c0 .5-.4.800-.8.800H1c-.5 0-.8-.4-.8-.8V1C.2.600.6.200 1 .2z" fill="#86c43f"/><path d="M5.600.2v3h3.200z" fill="#c9e6a0"/><path d="M3.600 5.300L2.200 6.800l1.400 1.500M5.400 5.300l1.400 1.500-1.400 1.500" fill="none" stroke="#2e4a12" stroke-width=".9"/></svg>
<span class="t bc" style="left:176px;color:#bdbdbd">apply.wxml</span>
<svg style="left:227.8px;top:25.300px" width="4.300" height="7.600" viewBox="0 0 4 7" fill="none" stroke="#8a8a8a" stroke-width=".9"><path d="M.5.500l3 3-3 3"/></svg>
<svg style="left:236px;top:24px" width="10" height="9.500" viewBox="0 0 10 9.500" fill="none" stroke="#4f9fdc" stroke-width=".85"><path d="M3.300.8L9.300 1.800v4.400L6.300 8.800.7 7.600V3.200z"/><path d="M.7 3.200l5.600 1.200 3-2.600M6.300 4.400v4.400"/></svg>
<span class="t bc" style="left:251px;color:#a2a2a2">view.container</span>
<svg style="left:316.8px;top:25.300px" width="4.300" height="7.600" viewBox="0 0 4 7" fill="none" stroke="#8a8a8a" stroke-width=".9"><path d="M.5.500l3 3-3 3"/></svg>
<svg style="left:325px;top:24px" width="10" height="9.500" viewBox="0 0 10 9.500" fill="none" stroke="#4f9fdc" stroke-width=".85"><path d="M3.300.8L9.300 1.800v4.400L6.300 8.800.7 7.600V3.200z"/><path d="M.7 3.200l5.600 1.200 3-2.600M6.300 4.400v4.400"/></svg>
<span class="t bc" style="left:339.7px;color:#a2a2a2">view.step-content</span>
<svg style="left:420.4px;top:25.300px" width="4.300" height="7.600" viewBox="0 0 4 7" fill="none" stroke="#8a8a8a" stroke-width=".9"><path d="M.5.500l3 3-3 3"/></svg>
<svg style="left:429px;top:24px" width="10" height="9.500" viewBox="0 0 10 9.500" fill="none" stroke="#4f9fdc" stroke-width=".85"><path d="M3.300.8L9.300 1.800v4.400L6.300 8.800.7 7.600V3.200z"/><path d="M.7 3.200l5.600 1.200 3-2.600M6.300 4.400v4.400"/></svg>
<span class="t bc" style="left:444px;color:#a2a2a2">view.card</span>
<svg style="left:488px;top:25.300px" width="4.300" height="7.600" viewBox="0 0 4 7" fill="none" stroke="#8a8a8a" stroke-width=".9"><path d="M.5.500l3 3-3 3"/></svg>
<svg style="left:496px;top:24px" width="10" height="9.500" viewBox="0 0 10 9.500" fill="none" stroke="#4f9fdc" stroke-width=".85"><path d="M3.300.8L9.300 1.800v4.400L6.300 8.800.7 7.600V3.200z"/><path d="M.7 3.200l5.600 1.200 3-2.600M6.300 4.400v4.400"/></svg>
<span class="t bc" style="left:511px;color:#a2a2a2">view.card-body</span>
<svg style="left:581.5px;top:25.300px" width="4.300" height="7.600" viewBox="0 0 4 7" fill="none" stroke="#8a8a8a" stroke-width=".9"><path d="M.5.500l3 3-3 3"/></svg>
<svg style="left:589.5px;top:24px" width="10" height="9.500" viewBox="0 0 10 9.500" fill="none" stroke="#4f9fdc" stroke-width=".85"><path d="M3.300.8L9.300 1.800v4.400L6.300 8.800.7 7.600V3.200z"/><path d="M.7 3.200l5.600 1.200 3-2.600M6.300 4.400v4.400"/></svg>
<span class="t bc" style="left:604px;color:#a2a2a2">view.form-group</span>
<svg style="left:680px;top:25.300px" width="4.300" height="7.600" viewBox="0 0 4 7" fill="none" stroke="#8a8a8a" stroke-width=".9"><path d="M.5.500l3 3-3 3"/></svg>
<svg style="left:688px;top:24px" width="10" height="9.500" viewBox="0 0 10 9.500" fill="none" stroke="#4f9fdc" stroke-width=".85"><path d="M3.300.8L9.300 1.800v4.400L6.300 8.800.7 7.600V3.200z"/><path d="M.7 3.200l5.600 1.200 3-2.600M6.300 4.400v4.400"/></svg>
<span class="ln mono" style="left:1.500px;top:37.45px">1</span>
<span class="cl mono" style="left:33.80px;top:37.45px"><span style="color:#d2c11f">&lt;!-- </span><span style="color:#52b95c"><span class="cj">草稿保存提示</span></span><span style="color:#d2c11f"> --&gt;</span></span>
<span class="ln mono" style="left:1.500px;top:55.75px">2</span>
<svg style="left:21px;top:59.55px" width="7" height="4.500" viewBox="0 0 7 4.500" fill="none" stroke="#cfcfcf" stroke-width="1.100"><path d="M.5.500l3 3 3-3"/></svg>
<span class="cl mono" style="left:33.80px;top:55.75px"><span style="color:#4f9fdc">&lt;view</span><span style="color:#d6d6d6"> class=</span><span style="color:#bcd4e6">"</span><span style="color:#f06c52">draft-tip </span><span style="color:#d2c11f">{</span><span style="color:#c86fd8">{</span><span style="color:#d6d6d6">draftTipShow </span><span style="color:#d2c11f">?</span><span style="color:#d6d6d6"> </span><span style="color:#bcd4e6">'</span><span style="color:#f06c52">show</span><span style="color:#bcd4e6">'</span><span style="color:#d6d6d6"> : </span><span style="color:#bcd4e6">''</span><span style="color:#c86fd8">}</span><span style="color:#d2c11f">}</span><span style="color:#bcd4e6">"</span><span style="color:#4f9fdc">&gt;</span></span>
<span class="ln mono" style="left:1.500px;top:74.05px">3</span>
<span class="cl mono" style="left:43.98px;top:74.05px"><span style="color:#d6d6d6"><span class="cj">草稿已自动保存</span></span></span>
<span class="ln mono" style="left:1.500px;top:92.35px">4</span>
<span class="cl mono" style="left:33.80px;top:92.35px"><span style="color:#4f9fdc">&lt;/view&gt;</span></span>
<span class="ln mono" style="left:1.500px;top:110.65px">5</span>
<span class="ln mono" style="left:1.500px;top:128.95px">6</span>
<span class="cl mono" style="left:33.80px;top:128.95px"><span style="color:#d2c11f">&lt;!-- </span><span style="color:#52b95c"><span class="cj">步骤进度条</span></span><span style="color:#d2c11f"> --&gt;</span></span>
<span class="ln mono" style="left:1.500px;top:147.25px">7</span>
<svg style="left:21px;top:151.05px" width="7" height="4.500" viewBox="0 0 7 4.500" fill="none" stroke="#cfcfcf" stroke-width="1.100"><path d="M.5.500l3 3 3-3"/></svg>
<span class="cl mono" style="left:33.80px;top:147.25px"><span style="color:#4f9fdc">&lt;view</span><span style="color:#d6d6d6"> class=</span><span style="color:#bcd4e6">"</span><span style="color:#f06c52">steps-container</span><span style="color:#bcd4e6">"</span><span style="color:#4f9fdc">&gt;</span></span>
<span class="ln mono" style="left:1.500px;top:165.55px">8</span>
<span class="cl mono" style="left:43.98px;top:165.55px"><span style="color:#4f9fdc">&lt;step-progress</span><span style="color:#d6d6d6"> steps=</span><span style="color:#bcd4e6">"</span><span style="color:#d2c11f">{</span><span style="color:#c86fd8">{</span><span style="color:#3d8fe0">[</span><span style="color:#bcd4e6">'</span><span style="color:#f06c52"><span class="cj">基本信息</span></span><span style="color:#bcd4e6">'</span><span style="color:#d6d6d6">, </span><span style="color:#bcd4e6">'</span><span style="color:#f06c52"><span class="cj">经营信息</span></span><span style="color:#bcd4e6">'</span><span style="color:#d6d6d6">, </span><span style="color:#bcd4e6">'</span><span style="color:#f06c52"><span class="cj">结算信息</span></span><span style="color:#bcd4e6">'</span><span style="color:#d6d6d6">, </span><span style="color:#bcd4e6">'</span><span style="color:#f06c52"><span class="cj">资质材料</span></span><span style="color:#bcd4e6">'</span><span style="color:#d6d6d6">, </span><span style="color:#bcd4e6">'</span><span style="color:#f06c52"><span class="cj">确认提交</span></span><span style="color:#bcd4e6">'</span><span style="color:#3d8fe0">]</span><span style="color:#c86fd8">}</span><span style="color:#d2c11f">}</span><span style="color:#bcd4e6">"</span><span style="color:#d6d6d6"> current=</span><span style="color:#bcd4e6">"</span><span style="color:#d2c11f">{</span><span style="color:#c86fd8">{</span><span style="color:#d6d6d6">currentStep</span><span style="color:#bcd4e6">-</span><span style="color:#f06c52">1</span><span style="color:#c86fd8">}</span><span style="color:#d2c11f">}</span><span style="color:#bcd4e6">"</span></span>
<span class="cl mono" style="left:43.98px;top:183.85px"><span style="color:#d6d6d6">bindstepchange=</span><span style="color:#bcd4e6">"</span><span style="color:#f06c52">onStepChange</span><span style="color:#bcd4e6">"</span><span style="color:#4f9fdc"> /&gt;</span></span>
<span class="ln mono" style="left:1.500px;top:202.15px">9</span>
<span class="cl mono" style="left:33.80px;top:202.15px"><span style="color:#4f9fdc">&lt;/view&gt;</span></span>
<span class="ln mono" style="left:1.500px;top:220.45px">10</span>
<span class="ln mono" style="left:1.500px;top:238.75px">11</span>
<span class="cl mono" style="left:33.80px;top:238.75px"><span style="color:#d2c11f">&lt;!-- </span><span style="color:#52b95c"><span class="cj">表单内容区域</span></span><span style="color:#d2c11f"> --&gt;</span></span>
<span class="ln mono" style="left:1.500px;top:257.05px">12</span>
<svg style="left:21px;top:260.85px" width="7" height="4.500" viewBox="0 0 7 4.500" fill="none" stroke="#cfcfcf" stroke-width="1.100"><path d="M.5.500l3 3 3-3"/></svg>
<span class="cl mono" style="left:33.80px;top:257.05px"><span style="color:#4f9fdc">&lt;view</span><span style="color:#d6d6d6"> class=</span><span style="color:#bcd4e6">"</span><span style="color:#f06c52">container</span><span style="color:#bcd4e6">"</span><span style="color:#4f9fdc">&gt;</span></span>
<div class="a" style="left:35px;top:74.1px;width:.6px;height:18.3px;background:#484848"></div>
<div class="a" style="left:35px;top:165.6px;width:.6px;height:36.6px;background:#484848"></div>
<div class="a" style="left:0;top:165.6px;width:1.500px;height:18.3px;background:#4a4a4a"></div>
<div class="a" style="left:687px;top:36px;width:.6px;height:235px;background:#3a3a3a"></div>
<div class="a" style="left:687.500px;top:36.800px;width:10.500px;height:11.700px;background:#464646"></div>
<div class="a" style="left:687.500px;top:48.500px;width:10.500px;height:40px;background:#343434"></div>
<div class="a" style="left:687.500px;top:88px;width:10.500px;height:1px;background:#6a6a6a"></div>
</div>

<!-- DEBUGGER -->
<div id="dbg" class="a">
<div class="a" style="left:0;top:0;width:698px;height:21px;background:#353535;border-top:.8px solid #404040"></div>
<span class="t" style="left:14px;top:3.500px;height:14px;line-height:14px;font-size:7.700px;color:#7e7e7e;">构建</span>
<span class="t" style="left:43.5px;top:3.500px;height:14px;line-height:14px;font-size:7.700px;color:#f2f2f2;font-weight:bold;">调试器</span>
<div class="a" style="left:43px;top:18.700px;width:23.400px;height:1px;background:#e0e0e0"></div>
<div class="a" style="left:72.600px;top:5px;width:14.600px;height:10.400px;border-radius:5.200px;background:#4c4c4c;color:#f6f6f6;font-size:8.600px;line-height:10.600px;text-align:center">11</div>
<span class="t" style="left:102px;top:3.500px;height:14px;line-height:14px;font-size:7.700px;color:#7e7e7e;">问题</span>
<span class="t" style="left:131px;top:3.500px;height:14px;line-height:14px;font-size:7.700px;color:#7e7e7e;">输出</span>
<span class="t" style="left:161px;top:3.500px;height:14px;line-height:14px;font-size:7.700px;color:#7e7e7e;">终端</span>
<span class="t" style="left:190px;top:3.500px;height:14px;line-height:14px;font-size:7.700px;color:#7e7e7e;">代码质量</span>
<svg style="left:652.500px;top:8px" width="8" height="5" viewBox="0 0 8 5" fill="none" stroke="#d8d8d8" stroke-width="1"><path d="M.5 4.500L4 1l3.500 3.500"/></svg>
<svg style="left:675.500px;top:7px" width="7" height="7" viewBox="0 0 7 7" fill="none" stroke="#d8d8d8" stroke-width="1"><path d="M.5.500l6 6M6.500.5l-6 6"/></svg>
<div class="a" style="left:0;top:20.500px;width:698px;height:20px;background:#323234"></div>
<div class="a" style="left:0;top:40px;width:698px;height:.7px;background:#3e3f43"></div>
<svg style="left:7px;top:25px" width="11" height="11" viewBox="0 0 11 11" fill="none" stroke="#9aa0a6" stroke-width="1"><path d="M8.500 4V1H.6v7.800H4" stroke-dasharray="0"/><path d="M5 4.500l1.800 5.800 1-2.300 2.400-1z" fill="#9aa0a6" stroke="none"/><path d="M8 8l2 2.200"/></svg>
<div class="a" style="left:24.700px;top:25px;width:.7px;height:11px;background:#4c4d52"></div>
<span class="t" style="left:37px;top:22.900px;height:15px;line-height:15px;font-size:8.700px;letter-spacing:-.2px;color:#d6d6d6">Wxml</span>
<div class="a" style="left:67px;top:20.500px;width:46.300px;height:18.400px;background:#000;z-index:2"></div><div class="a" style="left:59.900px;top:15.900px;width:58.600px;height:28.200px;border:3.100px solid #ee5358;z-index:2"></div>
<span class="t" style="z-index:3;left:74.7px;top:22.900px;height:15px;line-height:15px;font-size:8.700px;letter-spacing:-.2px;color:#fff">Console</span>
<span class="t" style="left:121px;top:22.900px;height:15px;line-height:15px;font-size:8.700px;letter-spacing:-.2px;color:#d6d6d6">Sources</span>
<span class="t" style="left:167px;top:22.900px;height:15px;line-height:15px;font-size:8.700px;letter-spacing:-.2px;color:#d6d6d6">Network</span>
<span class="t" style="left:215px;top:22.900px;height:15px;line-height:15px;font-size:8.700px;letter-spacing:-.2px;color:#d6d6d6">Performance</span>
<span class="t" style="left:279px;top:22.900px;height:15px;line-height:15px;font-size:8.700px;letter-spacing:-.2px;color:#d6d6d6">Memory</span>
<span class="t" style="left:326px;top:22.900px;height:15px;line-height:15px;font-size:8.700px;letter-spacing:-.2px;color:#d6d6d6">AppData</span>
<span class="t" style="left:375px;top:22.900px;height:15px;line-height:15px;font-size:8.700px;letter-spacing:-.2px;color:#d6d6d6">Storage</span>
<span class="t" style="left:420px;top:22.900px;height:15px;line-height:15px;font-size:8.700px;letter-spacing:-.2px;color:#d6d6d6">Security</span>
<span class="t" style="left:473px;top:22.900px;height:15px;line-height:15px;font-size:8.700px;letter-spacing:-.2px;color:#d6d6d6">Sensor</span>
<span class="t" style="left:515px;top:22.900px;height:15px;line-height:15px;font-size:8.700px;letter-spacing:-.2px;color:#d6d6d6">Mock</span>
<span class="t" style="left:552px;top:22.900px;height:15px;line-height:15px;font-size:8.700px;letter-spacing:-.2px;color:#d6d6d6">Audits</span>
<svg style="left:590px;top:26px" width="7" height="6" viewBox="0 0 7 6" fill="none" stroke="#b0b0b0" stroke-width=".9"><path d="M.5.500L3 3 .5 5.500M3.800.5L6.300 3 3.800 5.500"/></svg>
<svg style="left:607.300px;top:25.300px" width="7.800" height="6.800" viewBox="0 0 8 7"><path d="M4 .2L7.800 6.800H.2z" fill="#f4c430"/></svg>
<span class="t" style="left:617.7px;top:22.900px;height:15px;line-height:15px;font-size:9px;letter-spacing:-.2px;color:#f0f0f0">11</span>
<div class="a" style="left:635px;top:25px;width:.7px;height:11px;background:#4c4d52"></div>
<svg style="left:642px;top:24.3px" width="10" height="10" viewBox="0 0 10 10"><path d="M4.200 0h1.600l.3 1.300.9.400 1.100-.7 1.100 1.100-.7 1.100.4.900L10 4.200v1.600l-1.300.3-.4.900.7 1.100-1.100 1.100-1.100-.7-.9.400L5.800 10H4.200l-.3-1.300-.9-.4-1.100.7L.8 7.900l.7-1.100-.4-.9L0 5.800V4.200l1.300-.3.400-.9L1 1.900 2.100.8l1.100.7.900-.4z" fill="#9aa0a6"/><circle cx="5" cy="5" r="1.700" fill="#323234"/></svg>
<svg style="left:665.500px;top:24.500px" width="3" height="10" viewBox="0 0 3 10"><circle cx="1.500" cy="1.500" r="1" fill="#9aa0a6"/><circle cx="1.500" cy="5" r="1" fill="#9aa0a6"/><circle cx="1.500" cy="8.500" r="1" fill="#9aa0a6"/></svg>
<svg style="left:680px;top:24.700px" width="11.500" height="10" viewBox="0 0 11 10" fill="none" stroke="#8c8f94" stroke-width="1.250"><rect x="2.800" y=".6" width="7.600" height="6.200"/><path d="M2.800 3H.6v6.400h7.600V6.800"/></svg>
<div class="a" style="left:0;top:40.700px;width:698px;height:18.500px;background:#2c2d30"></div>
<div class="a" style="left:0;top:59px;width:698px;height:.7px;background:#3e3f43"></div>
<svg style="left:6px;top:43.500px" width="11" height="10" viewBox="0 0 11 10" fill="none" stroke="#9aa0a6" stroke-width="1"><rect x=".6" y=".6" width="9.800" height="8.800" rx=".4"/><path d="M2.500.6v8.800" stroke-width=".8"/><path d="M4.600 3l3 2-3 2z" fill="#9aa0a6" stroke="none"/></svg>
<svg style="left:27px;top:43.500px" width="10" height="10" viewBox="0 0 10 10" fill="none" stroke="#9aa0a6" stroke-width="1.200"><circle cx="5" cy="5" r="4"/><path d="M2.200 2.200l5.600 5.600"/></svg>
<div class="a" style="left:43.500px;top:44px;width:.7px;height:11px;background:#4c4d52"></div>
<span class="t" style="left:50.7px;top:41.500px;height:15px;line-height:15px;font-size:8.500px;letter-spacing:-.1px;color:#d0d3d7">top</span>
<svg style="left:135px;top:46px" width="5.500" height="4" viewBox="0 0 5.500 4"><path d="M0 0h5.500L2.750 4z" fill="#9aa0a6"/></svg>
<div class="a" style="left:147px;top:44px;width:.7px;height:11px;background:#4c4d52"></div>
<svg style="left:154.500px;top:44.500px" width="12" height="8" viewBox="0 0 12 8"><path d="M6 .3C3.300.300 1.200 1.800 0 4c1.200 2.200 3.300 3.700 6 3.700s4.800-1.500 6-3.700C10.800 1.800 8.700.3 6 .3z" fill="#9aa0a6"/><circle cx="6" cy="4" r="2.200" fill="#2c2d30"/><circle cx="6" cy="4" r="1.100" fill="#9aa0a6"/></svg>
<div class="a" style="left:178px;top:43px;width:144px;height:13px;background:#1f1f21;border:.7px solid #4a4b50"></div>
<span class="t" style="left:181.5px;top:41.500px;height:15px;line-height:15px;font-size:8.500px;letter-spacing:-.1px;color:#c0c4c8">Filter</span>
<span class="t" style="left:328px;top:41.500px;height:15px;line-height:15px;font-size:8.500px;letter-spacing:-.1px;color:#c8ccd0">Default levels</span>
<svg style="left:381px;top:46px" width="5" height="4" viewBox="0 0 5 4"><path d="M0 0h5L2.500 4z" fill="#9aa0a6"/></svg>
<div class="a" style="left:632.500px;top:44px;width:.7px;height:11px;background:#4c4d52"></div>
<span class="t" style="left:640.2px;top:41.500px;height:15px;line-height:15px;font-size:8.800px;letter-spacing:-.1px;color:#a4a8ac">2 hidden</span>
<svg style="left:681.3px;top:43.7px" width="10" height="10" viewBox="0 0 10 10"><path d="M4.200 0h1.600l.3 1.300.9.400 1.100-.7 1.100 1.100-.7 1.100.4.900L10 4.200v1.600l-1.300.3-.4.900.7 1.100-1.100 1.100-1.100-.7-.9.400L5.800 10H4.200l-.3-1.300-.9-.4-1.100.7L.8 7.900l.7-1.100-.4-.9L0 5.800V4.200l1.300-.3.400-.9L1 1.900 2.100.8l1.100.7.900-.4z" fill="#9aa0a6"/><circle cx="5" cy="5" r="1.700" fill="#323234"/></svg>
<div class="a" style="left:0;top:59.500px;width:698px;height:160px;background:#26262a"></div>
<div class="cr w" style="top:59.3px;height:13.5px"><span class="t mono" style="left:17px;top:1.3px;height:11px;line-height:11px">invalid app.json permission["scope.userInfo"]<span class="cc" style="letter-spacing:1.100px">、</span>app.json permission["scope.camera"]<span class="cc" style="letter-spacing:1.100px">、</span>app.json permission["scope.album"]</span></div>
<svg style="left:5.300px;top:62.500000000000014px" width="6.500" height="6" viewBox="0 0 6.500 6"><path d="M3.250 .1L6.400 5.900H.1z" fill="#f5c431"/><path d="M3.250 2.200v2" stroke="#fff" stroke-width=".7"/></svg>
<div class="cr w" style="top:72.8px;height:24.7px"><span class="t mono" style="left:17px;top:1.3px;height:11px;line-height:11px">[Deprecation] SharedArrayBuffer will require cross-origin isolation as of M92, around July 2021. See <u>https://developer.chrome.com/blog/enabli</u></span><span class="t mono" style="left:17px;top:11.8px;height:11px;line-height:11px"><u>ng-shared-array-buffer/</u> for more details.</span></div>
<svg style="left:5.300px;top:76.00000000000001px" width="6.500" height="6" viewBox="0 0 6.500 6"><path d="M3.250 .1L6.400 5.900H.1z" fill="#f5c431"/><path d="M3.250 2.200v2" stroke="#fff" stroke-width=".7"/></svg>
<div class="cr" style="top:97.5px;height:14.5px"><span class="t mono" style="left:17px;top:2.5px;height:11px;line-height:11px">[system] WeChatLib: 3.11.1 (2025.11.5 18:36:14)</span></div>
<div class="cr" style="top:112.0px;height:14.3px"><span class="t mono" style="left:17px;top:2.5px;height:11px;line-height:11px">[system] Subpackages: N/A</span></div>
<div class="cr" style="top:126.3px;height:14.5px"><span class="t mono" style="left:17px;top:2.5px;height:11px;line-height:11px">[system] LazyCodeLoading: true</span></div>
<div class="cr w" style="top:140.8px;height:24.5px"><span class="t mono" style="left:17px;top:1.3px;height:11px;line-height:11px">[Perf] <span class="cc" style="letter-spacing:1.130px">全局自定义组件可能影响按需注入的效果，请谨慎使用（在</span> app.json <span class="cc" style="letter-spacing:1.130px">中检测到</span> 1 <span class="cc" style="letter-spacing:1.130px">个）。</span></span><span class="t mono" style="left:17px;top:11.8px;height:11px;line-height:11px"><span class="cc">参考</span> <u>https://developers.weixin.qq.com/miniprogram/dev/framework/ability/lazyload.html</u></span></div>
<svg style="left:5.300px;top:144.0px" width="6.500" height="6" viewBox="0 0 6.500 6"><path d="M3.250 .1L6.400 5.900H.1z" fill="#f5c431"/><path d="M3.250 2.200v2" stroke="#fff" stroke-width=".7"/></svg>
<div class="cr" style="top:165.3px;height:14.7px"><span class="t mono" style="left:17px;top:2.5px;height:11px;line-height:11px">Lazy code loading is enabled. Only injecting required components.</span></div>
<div class="cr w" style="top:180.0px;height:14.3px"><span class="t mono" style="left:17px;top:1.3px;height:11px;line-height:11px">invalid app.json permission["scope.userInfo"]<span class="cc" style="letter-spacing:1.100px">、</span>app.json permission["scope.camera"]<span class="cc" style="letter-spacing:1.100px">、</span>app.json permission["scope.album"]</span></div>
<svg style="left:5.300px;top:183.2px" width="6.500" height="6" viewBox="0 0 6.500 6"><path d="M3.250 .1L6.400 5.900H.1z" fill="#f5c431"/><path d="M3.250 2.200v2" stroke="#fff" stroke-width=".7"/></svg>
<div class="cr" style="top:194.3px;height:14.2px"><span class="t mono" style="left:17px;top:2.5px;height:11px;line-height:11px"><span class="cc">微信支付商户进件小程序启动</span></span></div>
<div class="cr w" style="top:208.5px;height:14.5px"><span class="t mono" style="left:17px;top:1.3px;height:11px;line-height:11px"><span style="color:#9a9a9a;font-size:6px;position:relative;top:-.5px">▶</span>wx.getSystemInfo is deprecated.Please use wx.getSystemSetting/wx.getAppAuthorizeSetting/wx.getDeviceInfo/wx.getWindowInfo/wx.getAppBaseInfo</span></div>
<svg style="left:5.300px;top:211.7px" width="6.500" height="6" viewBox="0 0 6.500 6"><path d="M3.250 .1L6.400 5.900H.1z" fill="#f5c431"/><path d="M3.250 2.200v2" stroke="#fff" stroke-width=".7"/></svg>
<span class="t mono" style="right:30px;top:195.600px;height:11px;line-height:11px;font-size:7.740px;color:#c4c4c4;font-weight:bold;text-decoration:underline">app.js:7</span>
<div class="a" style="left:687px;top:59.500px;width:11px;height:160px;background:#2a2a2d"></div>
<div class="a" style="left:688px;top:77px;width:10px;height:142px;background:#3b3b3d"></div>
</div>

<!-- STATUS -->
<div id="status" class="a">
<svg style="left:12px;top:5px" width="9" height="9" viewBox="0 0 9 9" fill="none" stroke="#a0a0a0" stroke-width=".8"><circle cx="4.500" cy="4.500" r="3.900"/><path d="M3 3l3 3M6 3L3 6"/></svg>
<span class="t" style="left:24px;top:2.500px;height:14px;line-height:14px;font-size:9px;color:#a0a0a0">0</span>
<svg style="left:31.500px;top:5px" width="10" height="9" viewBox="0 0 10 9" fill="none" stroke="#a0a0a0" stroke-width=".8"><path d="M5 .8L9.400 8.400H.6z"/><path d="M5 3.500v2.500M5 6.800v.8"/></svg>
<span class="t" style="left:43.500px;top:2.500px;height:14px;line-height:14px;font-size:9px;color:#a0a0a0">0</span>
<span class="t" style="left:579.7px;top:2.500px;height:14px;line-height:14px;font-size:8.200px;letter-spacing:-.1px;color:#8c8c8c">行 91，列 34</span>
<span class="t" style="left:639px;top:2.500px;height:14px;line-height:14px;font-size:8.200px;letter-spacing:-.1px;color:#8c8c8c">空格: 2</span>
<span class="t" style="left:676px;top:2.500px;height:14px;line-height:14px;font-size:8.200px;letter-spacing:-.1px;color:#8c8c8c">UTF-8</span>
<span class="t" style="left:710px;top:2.500px;height:14px;line-height:14px;font-size:8.200px;letter-spacing:-.5px;color:#8c8c8c">CRLF</span>
<span class="t" style="left:739px;top:2.500px;height:14px;line-height:14px;font-size:8.200px;letter-spacing:-.1px;color:#8c8c8c">WXML</span>
<span class="t" style="left:774.7px;top:2.500px;height:14px;line-height:14px;font-size:8.200px;letter-spacing:-.1px;color:#8c8c8c">AI 问答</span>
<span class="t" style="left:806.7px;top:2.500px;height:14px;line-height:14px;font-size:8.200px;letter-spacing:-.1px;color:#8c8c8c">(Ctrl+I)</span>
</div>

</div>
</body>
</html>
